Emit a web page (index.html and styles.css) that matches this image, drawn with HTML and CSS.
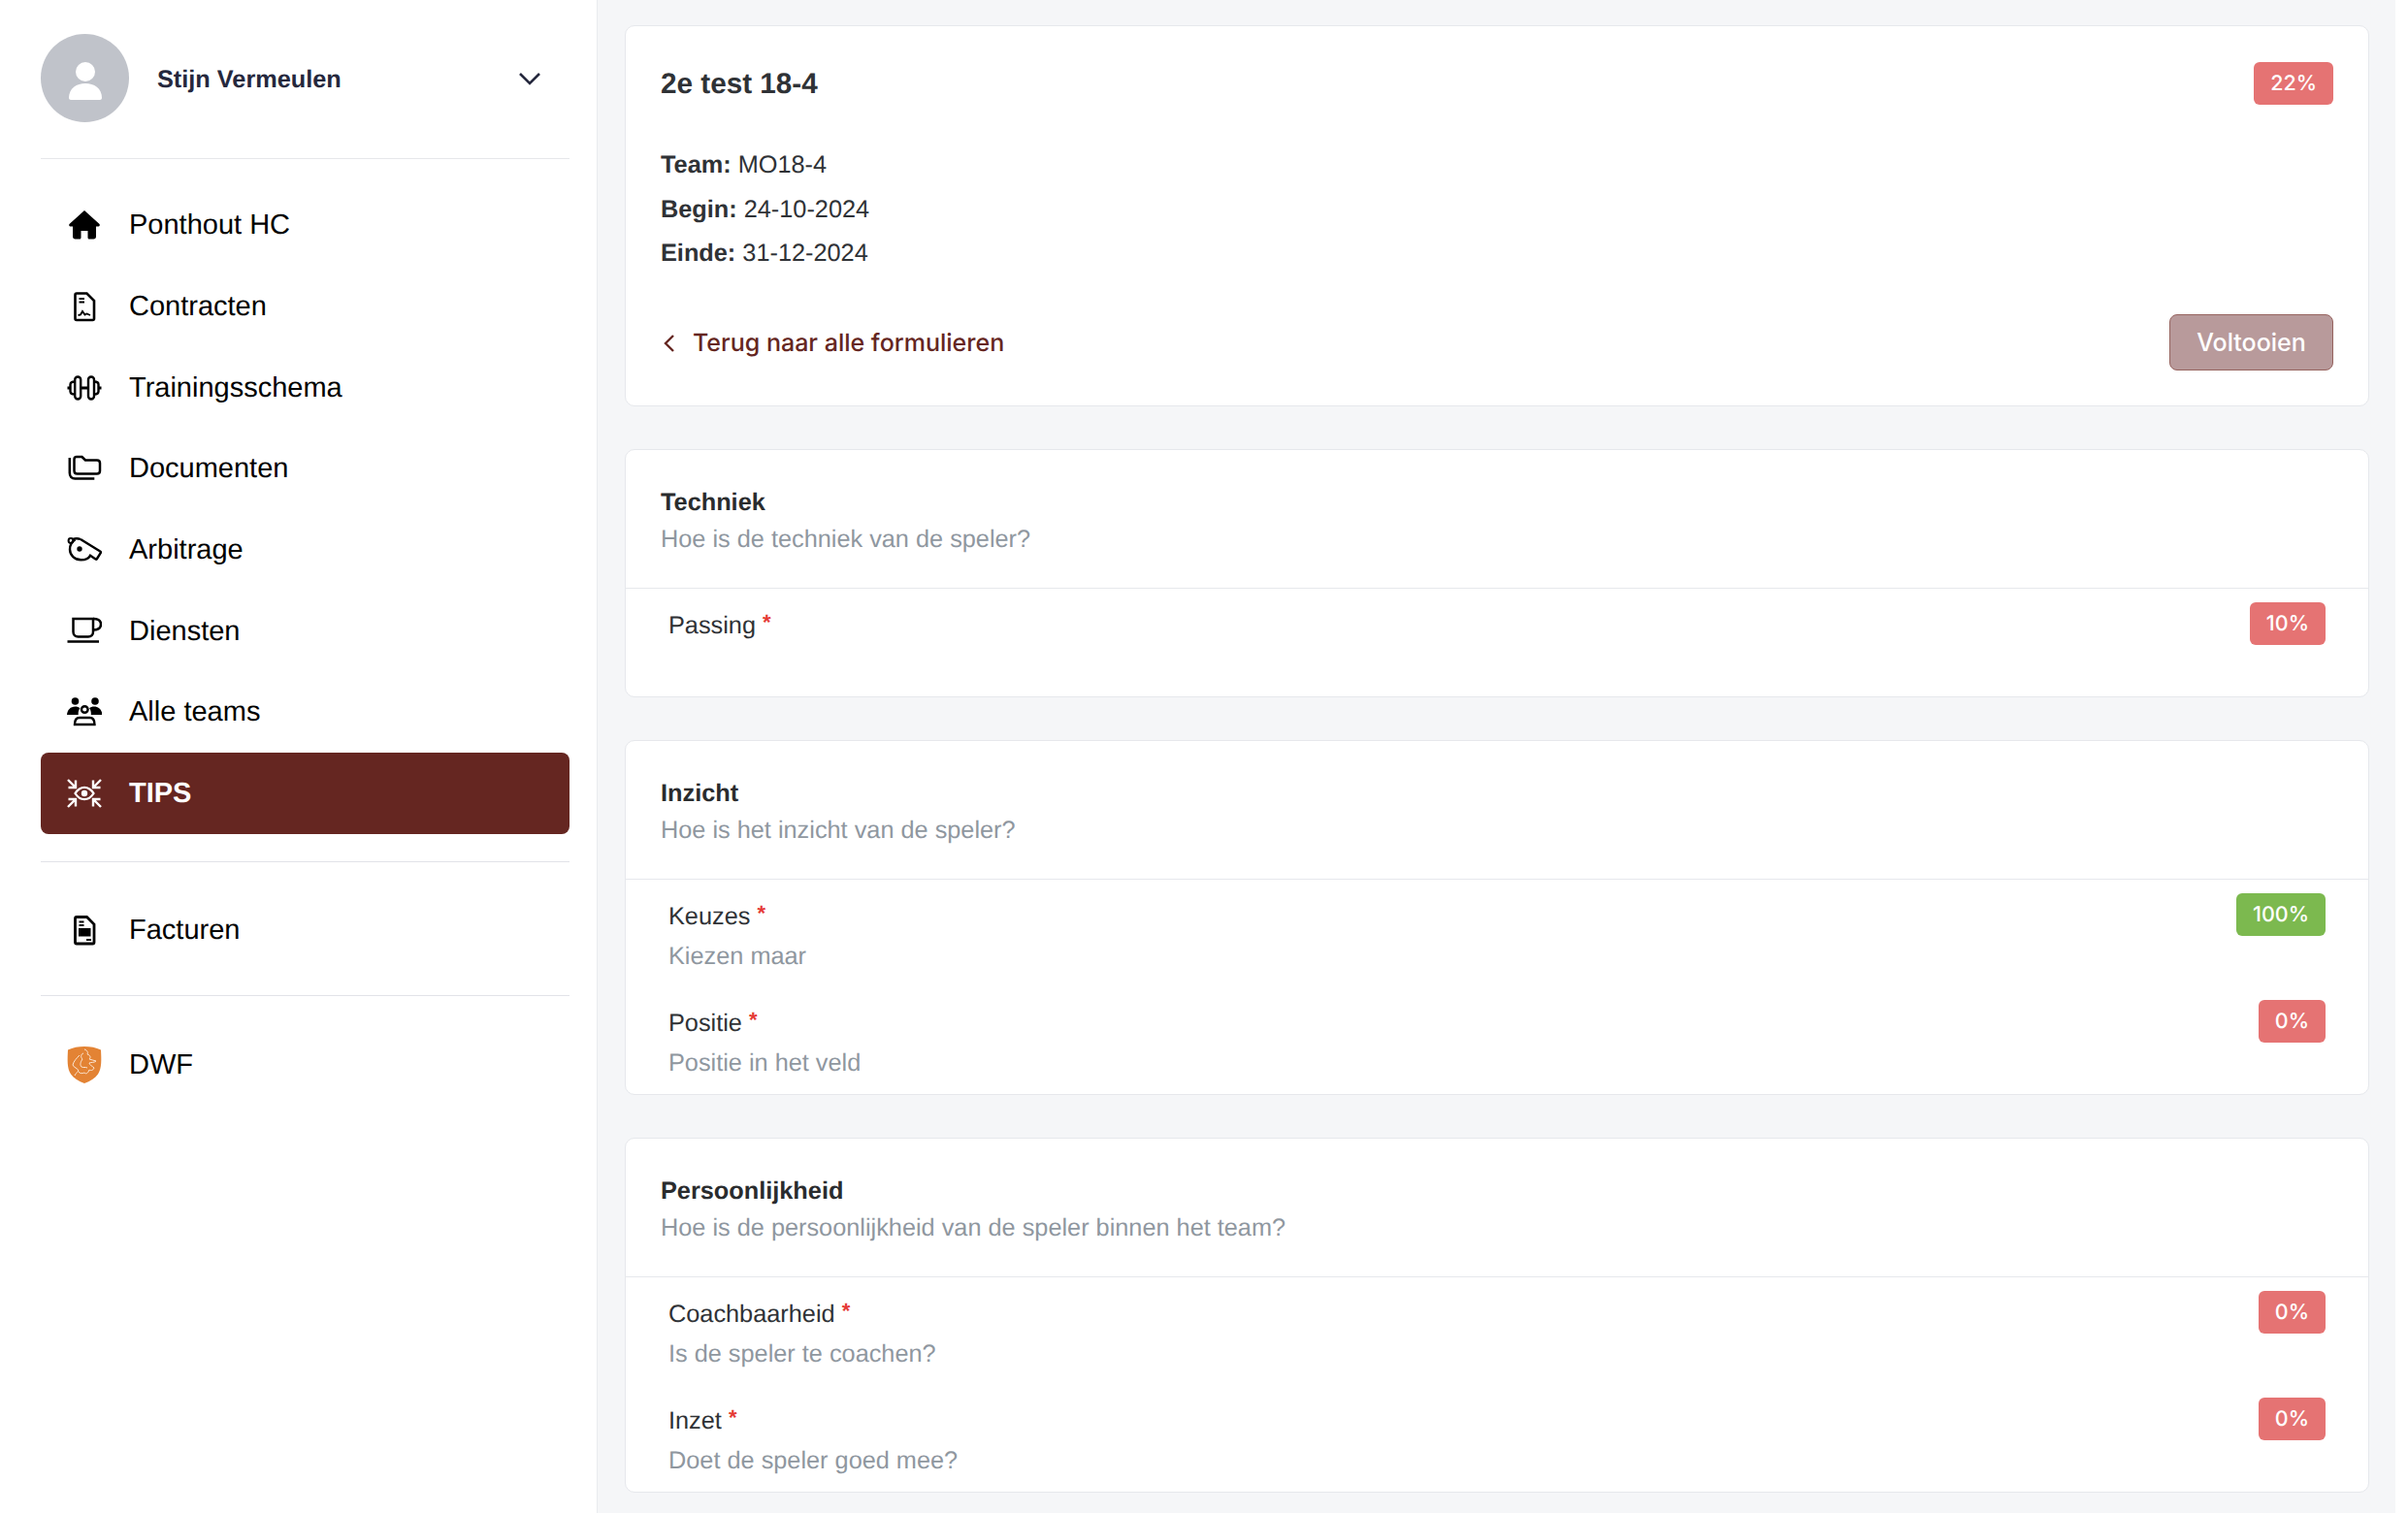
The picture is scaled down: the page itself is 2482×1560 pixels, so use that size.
FILE: index.html
```html
<!DOCTYPE html>
<html>
<head>
  <title>TIPS</title>
  <link rel="stylesheet" href="styles.css">
</head>
<body>
  <div class="app">
    <aside class="sidebar">
      <div class="user">
        <div class="avatar">
          <svg viewBox="0 0 90 90" width="90" height="90"><circle cx="45" cy="38" r="10" fill="#fff"/><path d="M28 65c0-10 8-15 17-15s17 5 17 15c0 1-1 2-2 2H30c-1 0-2-1-2-2z" fill="#fff"/></svg>
        </div>
        <span class="user-name">Stijn Vermeulen</span>
        <svg class="chevron" viewBox="0 0 24 14" width="24" height="14"><path d="M2 2l10 10L22 2" fill="none" stroke="#25283d" stroke-width="2.6"/></svg>
      </div>

      <nav class="nav nav-main">
        <a class="nav-item">
          <svg class="icon" viewBox="0 0 36 36"><path d="M18 3L2.500 17c-.8 1 0 2.500 1 2.500H6V30c0 1.500 1 2.500 2.500 2.500h4.500c1 0 1.500-.7 1.500-1.500v-7h7v7c0 .8.500 1.500 1.500 1.500h4.500c1.500 0 2.500-1 2.500-2.500V19.500h2.500c1 0 1.800-1.500 1-2.500z" fill="#000"/></svg>
          Ponthout HC
        </a>
        <a class="nav-item">
          <svg class="icon" viewBox="0 0 36 36" fill="none" stroke="#000"><path d="M10 4.500h10.500L28 12v18.500c0 1-.6 1.500-1.500 1.500h-16.500c-1 0-1.500-.5-1.500-1.500V6c0-1 .5-1.500 1.500-1.500z" stroke-width="2.600"/><path d="M12.500 10h5.500M12.500 13.500h5.500" stroke-width="1.900"/><path d="M11.500 27l2.500-.5 2-3.500 2.500 3.500 2-1 3.500 1.500" stroke-width="1.900"/></svg>
          Contracten
        </a>
        <a class="nav-item">
          <svg class="icon" viewBox="0 0 36 36" fill="none" stroke="#000"><g stroke-width="2.400"><rect x="8.200" y="6.500" width="6" height="23" rx="3"/><rect x="22" y="6.500" width="6" height="23" rx="3"/><path d="M8 11.500c-3 0-4.500 1-4.500 3v7c0 2 1.500 3 4.500 3M28 11.500c3 0 4.500 1 4.500 3v7c0 2-1.500 3-4.500 3"/></g><path d="M14 18h8M.5 18h3M32.500 18h3" stroke-width="2.800"/></svg>
          Trainingsschema
        </a>
        <a class="nav-item">
          <svg class="icon" viewBox="0 0 36 36" fill="none" stroke="#000" stroke-width="2.500"><path d="M10 6h5.500l3.500 3.500h12c1.800 0 3 1 3 3v8c0 2-1.200 3-3 3H10.500c-1.800 0-3-1-3-3V8.500c0-1.500 1-2.500 2.500-2.500z"/><path d="M2.800 7v15.500c0 3.500 2 6 5.500 6h20"/></svg>
          Documenten
        </a>
        <a class="nav-item">
          <svg class="icon" viewBox="0 0 36 36" fill="none" stroke="#000" stroke-width="2.400"><path d="M14 7l20.300 12.500c.7.400.8 1 .4 1.600L31 27c-.4.600-.9.800-1.500.5L24 23.800c-1.500 2.700-5 4.500-9.500 4.500-6.500 0-11.500-5-11.500-10.800 0-4.500 2-8 5.500-10"/><circle cx="4" cy="8.500" r="2.400" stroke-width="2"/><path d="M6 7c2.500-1 5.500-1 8 0"/><circle cx="13" cy="17" r="2.700" fill="#000" stroke="none"/></svg>
          Arbitrage
        </a>
        <a class="nav-item">
          <svg class="icon" viewBox="0 0 36 36" fill="none" stroke="#000" stroke-width="2.500"><path d="M6.500 5h20.500v13.500c0 3-2 5-5 5H11.500c-3 0-5-2-5-5z"/><path d="M27 5c5.500 0 8 1.800 8 5.500 0 4-3 6-8 6"/><path d="M.5 28.500h32.500"/></svg>
          Diensten
        </a>
        <a class="nav-item">
          <svg class="icon" viewBox="0 0 36 36"><g fill="#000"><circle cx="8.500" cy="7" r="3.800"/><circle cx="29" cy="7" r="3.800"/><path d="M0 21c.5-5 3.500-8.500 8.500-8.500 2 0 3.800.5 5 1.700-1.500 1.500-2 4-1.800 6.800z"/><path d="M36.500 21c-.5-5-3.500-8.500-8.500-8.500-2 0-3.800.5-5 1.700 1.500 1.500 2 4 1.800 6.800z"/></g><g fill="none" stroke="#000" stroke-width="2.400"><circle cx="18.300" cy="15.500" r="3.300"/><path d="M8 31c0-4.500 2-7 5-7h10.500c3 0 5 2.500 5 7z"/></g></svg>
          Alle teams
        </a>
        <a class="nav-item active">
          <svg class="icon" viewBox="0 0 36 36" fill="none" stroke="#fff"><path d="M8.500 18c2.500-4 5.500-6.200 9.500-6.200s7 2.200 9.500 6.200c-2.500 4-5.500 6.200-9.500 6.200S11 22 8.500 18z" stroke-width="2.300"/><circle cx="18" cy="18" r="3.200" fill="#fff" stroke="none"/><g stroke-width="2.400"><path d="M1 4l8 8M1.500 12H9V4.500"/><path d="M35 4l-8 8M34.500 12H27V4.500"/><path d="M1 32l8-8M1.500 24H9v7.500"/><path d="M35 32l-8-8M34.500 24H27v7.500"/></g></svg>
          TIPS
        </a>
      </nav>

      <nav class="nav nav-sep">
        <a class="nav-item">
          <svg class="icon" viewBox="0 0 36 36" fill="none" stroke="#000"><path d="M10 4.500h10.500L28 12v18.500c0 1-.6 1.500-1.500 1.500h-16.500c-1 0-1.500-.5-1.500-1.500V6c0-1 .5-1.500 1.500-1.500z" stroke-width="2.800"/><path d="M12.500 9.500h5M12.500 13h5M20 28h5" stroke-width="1.900"/><rect x="12" y="16" width="12.500" height="8.500" fill="#000" stroke="none"/></svg>
          Facturen
        </a>
      </nav>

      <nav class="nav nav-sep">
        <a class="nav-item">
          <svg class="icon icon-logo" viewBox="0 0 36 38"><path d="M18 0c6 0 12 1 17 3.500.5 10 1 19-3 25-3 4-8 7.500-14 9.500-6-2-11-5.500-14-9.500C0 22.500.5 13.500 1 3.500 6 1 12 0 18 0z" fill="#e38334"/><path d="M18 3c3 1 4 3 3 5 3 1 4 3 2 5 2 1 5 1 7 2-2 2-5 1-7 2 0 2 3 3 5 5-1 3-4 3-5 2-1 3-3 5-5 3-2 1-5 1-6-1M13 9c-3 3-6 6-7 10 1 3 5 3 6 6-2 2-3 3-4 5M17 7c-3 1-3 4-1 6-2 3-3 6-1 8 2 1 4 0 6 1" fill="none" stroke="#fbe6d3" stroke-width="1"/></svg>
          DWF
        </a>
      </nav>
    </aside>

    <main class="content">
      <section class="card card-intro">
        <div class="intro-top">
          <h1>2e test 18-4</h1>
          <span class="badge red">22%</span>
        </div>
        <div class="meta">
          <div><b>Team:</b> MO18-4</div>
          <div><b>Begin:</b> 24-10-2024</div>
          <div><b>Einde:</b> 31-12-2024</div>
        </div>
        <div class="intro-bottom">
          <a class="back-link">
            <svg viewBox="0 0 14 20" width="14" height="20"><path d="M11 2L3 10l8 8" fill="none" stroke="#652621" stroke-width="2.400"/></svg>
            Terug naar alle formulieren
          </a>
          <button class="done-btn">Voltooien</button>
        </div>
      </section>

      <section class="card">
        <header class="card-head">
          <h2>Techniek</h2>
          <p>Hoe is de techniek van de speler?</p>
        </header>
        <div class="question">
          <div>
            <div class="q-label">Passing <span class="req">*</span></div>
          </div>
          <span class="badge red">10%</span>
        </div>
      </section>

      <section class="card">
        <header class="card-head">
          <h2>Inzicht</h2>
          <p>Hoe is het inzicht van de speler?</p>
        </header>
        <div class="question">
          <div>
            <div class="q-label">Keuzes <span class="req">*</span></div>
            <div class="q-hint">Kiezen maar</div>
          </div>
          <span class="badge green">100%</span>
        </div>
        <div class="question">
          <div>
            <div class="q-label">Positie <span class="req">*</span></div>
            <div class="q-hint">Positie in het veld</div>
          </div>
          <span class="badge red">0%</span>
        </div>
      </section>

      <section class="card">
        <header class="card-head">
          <h2>Persoonlijkheid</h2>
          <p>Hoe is de persoonlijkheid van de speler binnen het team?</p>
        </header>
        <div class="question">
          <div>
            <div class="q-label">Coachbaarheid <span class="req">*</span></div>
            <div class="q-hint">Is de speler te coachen?</div>
          </div>
          <span class="badge red">0%</span>
        </div>
        <div class="question">
          <div>
            <div class="q-label">Inzet <span class="req">*</span></div>
            <div class="q-hint">Doet de speler goed mee?</div>
          </div>
          <span class="badge red">0%</span>
        </div>
      </section>
    </main>
    <div class="scroll-strip"></div>
  </div>
</body>
</html>
```

FILE: styles.css
```css
* {
  box-sizing: border-box;
}

html, body {
  margin: 0;
  padding: 0;
  height: 100%;
  overflow: hidden;
}

body {
  font-family: "Liberation Sans", Arial, sans-serif;
  background-color: #fff;
  color: #2f3236;
  text-rendering: geometricPrecision;
}

.app {
  display: flex;
  height: 1560px;
}

.sidebar {
  width: 616px;
  flex: none;
  padding: 0 28px 0 42px;
  background-color: #fff;
  border-right: 1px solid #e9ebef;
}

.user {
  display: flex;
  align-items: center;
  height: 164px;
  border-bottom: 1px solid #e6e7ea;
  padding-bottom: 2px;
}

.avatar {
  width: 91px;
  height: 91px;
  border-radius: 50%;
  background-color: #c0c3ca;
  display: flex;
  align-items: center;
  justify-content: center;
  flex: none;
}

.user-name {
  margin-left: 29px;
  padding-top: 3px;
  font-size: 25.3px;
  font-weight: bold;
  color: #25283d;
  flex: 1;
}

.chevron {
  margin-right: 29px;
}

.nav-main {
  padding-top: 26px;
}

.nav-sep {
  margin-top: 28px;
  border-top: 1px solid #e2e3e8;
  padding-top: 28px;
}

.nav-sep + .nav-sep {
  margin-top: 26px;
}

.nav-item {
  display: flex;
  align-items: center;
  height: 83.7px;
  padding-left: 27px;
  padding-top: 2px;
  font-size: 29px;
  color: #000;
  border-radius: 8px;
}

.nav-item.active {
  background-color: #652621;
  color: #fff;
  font-weight: bold;
}

.icon {
  width: 36px;
  height: 36px;
  margin-right: 28px;
  margin-top: -1px;
  flex: none;
}

.icon-logo {
  height: 38px;
}

.content {
  flex: 1;
  background-color: #f5f6f8;
  padding: 26px 27px 0 28px;
  min-width: 0;
}

.scroll-strip {
  width: 13px;
  flex: none;
  background-color: #fff;
}

.card {
  background-color: #fff;
  border: 1px solid #e6e8ec;
  border-radius: 10px;
  margin-bottom: 44px;
}

.card-intro {
  height: 393px;
  padding: 37px 36px 0;
}

.intro-top {
  display: flex;
  justify-content: space-between;
  align-items: center;
}

h1 {
  margin: 0;
  padding-top: 2px;
  font-size: 29.7px;
  font-weight: bold;
}

.meta {
  margin-top: 40px;
  font-size: 25.3px;
  line-height: 45.5px;
}

.intro-bottom {
  display: flex;
  justify-content: space-between;
  align-items: center;
  margin-top: 39px;
}

.back-link {
  display: flex;
  align-items: center;
  gap: 17px;
  padding-top: 2px;
  font-family: Inter, sans-serif;
  font-size: 25px;
  font-weight: 500;
  color: #652621;
}

.back-link svg {
  margin-left: 2px;
}

.done-btn {
  width: 169px;
  height: 58px;
  background-color: #b89a9b;
  border: 1px solid #96635f;
  border-radius: 8px;
  color: #fff;
  font-family: Inter, sans-serif;
  font-size: 25px;
  font-weight: 500;
}

.badge {
  height: 44px;
  padding: 0 17px;
  display: inline-flex;
  align-items: center;
  border-radius: 6px;
  font-family: Inter, sans-serif;
  font-size: 21.5px;
  font-weight: 500;
  color: #fff;
  flex: none;
}

.badge.red {
  background-color: #e57373;
}

.badge.green {
  background-color: #7cb94f;
}

.card-head {
  height: 143px;
  padding: 35px 36px 0;
  border-bottom: 1px solid #e6e8ec;
}

h2 {
  margin: 0;
  font-size: 25.3px;
  font-weight: bold;
  line-height: 38px;
  color: #2a2c2e;
}

.card-head p {
  margin: 0;
  font-size: 25.3px;
  line-height: 38px;
  color: #8f979f;
}

.question {
  height: 110.5px;
  padding: 13px 44px 0;
  display: flex;
  justify-content: space-between;
  align-items: flex-start;
}

.question .badge {
  margin-top: 1px;
}

.q-label {
  font-size: 25.3px;
  line-height: 44px;
}

.req {
  color: #e53935;
  font-size: 22px;
  font-weight: bold;
  vertical-align: 4px;
}

.q-hint {
  font-size: 25.3px;
  line-height: 38px;
  color: #8f979f;
}
```
